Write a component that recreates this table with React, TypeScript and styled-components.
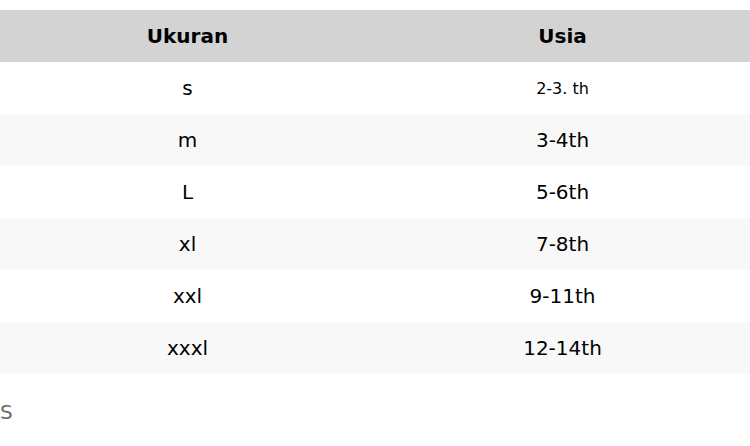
import styled, { createGlobalStyle } from "styled-components";

const GlobalStyle = createGlobalStyle`
  html, body {
    margin: 0;
    padding: 0;
    background: #ffffff;
  }
  body {
    font-family: "DejaVu Sans", "Liberation Sans", sans-serif;
  }
`;

const Page = styled.div`
  padding-top: 10px;
`;

const Table = styled.table`
  width: 100%;
  border-collapse: collapse;
  table-layout: fixed;
`;

const HeadCell = styled.th`
  height: 52px;
  padding: 0;
  background: #d3d3d3;
  color: #000;
  font-size: 20px;
  font-weight: bold;
  text-align: center;
`;

const Row = styled.tr<{ $striped: boolean }>`
  background: ${(p) => (p.$striped ? "#f8f8f8" : "#ffffff")};
`;

const Cell = styled.td<{ $small?: boolean }>`
  height: 52px;
  padding: 0;
  text-align: center;
  color: #000;
  font-size: ${(p) => (p.$small ? "16px" : "20px")};
`;

const Note = styled.p`
  margin: 27px 0 0;
  font-size: 20px;
  line-height: 23px;
  color: #6a6a6a;
`;

const sizes = [
  { size: "s", age: "2-3. th", small: true },
  { size: "m", age: "3-4th" },
  { size: "L", age: "5-6th" },
  { size: "xl", age: "7-8th" },
  { size: "xxl", age: "9-11th" },
  { size: "xxxl", age: "12-14th" },
];

export default function App() {
  return (
    <Page>
      <GlobalStyle />
      <Table>
        <thead>
          <tr>
            <HeadCell>Ukuran</HeadCell>
            <HeadCell>Usia</HeadCell>
          </tr>
        </thead>
        <tbody>
          {sizes.map((row, i) => (
            <Row key={row.size} $striped={i % 2 === 1}>
              <Cell>{row.size}</Cell>
              <Cell $small={row.small}>{row.age}</Cell>
            </Row>
          ))}
        </tbody>
      </Table>
      <Note>S</Note>
    </Page>
  );
}
